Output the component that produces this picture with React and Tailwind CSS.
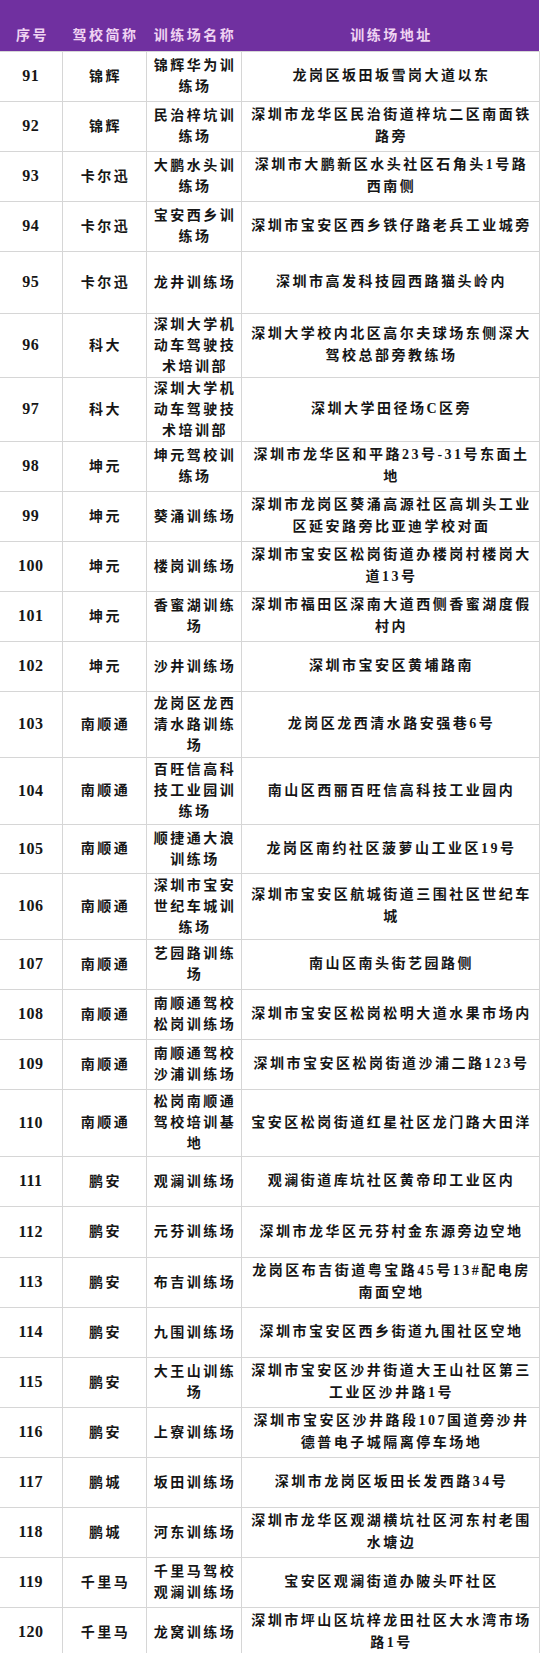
import React from 'react';

// [序号, 驾校简称, 训练场名称, 训练场地址, 行高]
const ROWS = [
  [91, '锦辉', '锦辉华为训\n练场', '龙岗区坂田坂雪岗大道以东', 50],
  [92, '锦辉', '民治梓坑训\n练场', '深圳市龙华区民治街道梓坑二区南面铁\n路旁', 50],
  [93, '卡尔迅', '大鹏水头训\n练场', '深圳市大鹏新区水头社区石角头1号路\n西南侧', 50],
  [94, '卡尔迅', '宝安西乡训\n练场', '深圳市宝安区西乡铁仔路老兵工业城旁', 50],
  [95, '卡尔迅', '龙井训练场', '深圳市高发科技园西路猫头岭内', 62],
  [96, '科大', '深圳大学机\n动车驾驶技\n术培训部', '深圳大学校内北区高尔夫球场东侧深大\n驾校总部旁教练场', 60],
  [97, '科大', '深圳大学机\n动车驾驶技\n术培训部', '深圳大学田径场C区旁', 64],
  [98, '坤元', '坤元驾校训\n练场', '深圳市龙华区和平路23号-31号东面土\n地', 50],
  [99, '坤元', '葵涌训练场', '深圳市龙岗区葵涌高源社区高圳头工业\n区延安路旁比亚迪学校对面', 50],
  [100, '坤元', '楼岗训练场', '深圳市宝安区松岗街道办楼岗村楼岗大\n道13号', 50],
  [101, '坤元', '香蜜湖训练\n场', '深圳市福田区深南大道西侧香蜜湖度假\n村内', 50],
  [102, '坤元', '沙井训练场', '深圳市宝安区黄埔路南', 50],
  [103, '南顺通', '龙岗区龙西\n清水路训练\n场', '龙岗区龙西清水路安强巷6号', 66],
  [104, '南顺通', '百旺信高科\n技工业园训\n练场', '南山区西丽百旺信高科技工业园内', 67],
  [105, '南顺通', '顺捷通大浪\n训练场', '龙岗区南约社区菠萝山工业区19号', 49],
  [106, '南顺通', '深圳市宝安\n世纪车城训\n练场', '深圳市宝安区航城街道三围社区世纪车\n城', 66],
  [107, '南顺通', '艺园路训练\n场', '南山区南头街艺园路侧', 50],
  [108, '南顺通', '南顺通驾校\n松岗训练场', '深圳市宝安区松岗松明大道水果市场内', 50],
  [109, '南顺通', '南顺通驾校\n沙浦训练场', '深圳市宝安区松岗街道沙浦二路123号', 50],
  [110, '南顺通', '松岗南顺通\n驾校培训基\n地', '宝安区松岗街道红星社区龙门路大田洋', 67],
  [111, '鹏安', '观澜训练场', '观澜街道库坑社区黄帝印工业区内', 50],
  [112, '鹏安', '元芬训练场', '深圳市龙华区元芬村金东源旁边空地', 51],
  [113, '鹏安', '布吉训练场', '龙岗区布吉街道粤宝路45号13#配电房\n南面空地', 50],
  [114, '鹏安', '九围训练场', '深圳市宝安区西乡街道九围社区空地', 50],
  [115, '鹏安', '大王山训练\n场', '深圳市宝安区沙井街道大王山社区第三\n工业区沙井路1号', 50],
  [116, '鹏安', '上寮训练场', '深圳市宝安区沙井路段107国道旁沙井\n德普电子城隔离停车场地', 50],
  [117, '鹏城', '坂田训练场', '深圳市龙岗区坂田长发西路34号', 50],
  [118, '鹏城', '河东训练场', '深圳市龙华区观湖横坑社区河东村老围\n水塘边', 50],
  [119, '千里马', '千里马驾校\n观澜训练场', '宝安区观澜街道办陂头吓社区', 50],
  [120, '千里马', '龙窝训练场', '深圳市坪山区坑梓龙田社区大水湾市场\n路1号', 50],
];

const font = "font-['Liberation_Serif','Noto_Sans_CJK_SC',serif]";

export default function App() {
  return (
    <div className={`w-[544px] bg-white ${font} text-[#161616]`}>
      <table className="w-[539px] table-fixed border-collapse">
        <colgroup>
          <col className="w-[62px]" />
          <col className="w-[84px]" />
          <col className="w-[95px]" />
          <col className="w-[298px]" />
        </colgroup>
        <thead>
          <tr className="h-[51px] bg-[#7030a0] text-[#efd3f2] text-[14px] font-bold tracking-[2.5px]">
            <th className="align-bottom pb-[4px] pl-[3px] leading-[22px] font-bold">序号</th>
            <th className="align-bottom pb-[4px] pl-[3px] leading-[22px] font-bold">驾校简称</th>
            <th className="align-bottom pb-[4px] pl-[3px] leading-[22px] font-bold">训练场名称</th>
            <th className="align-bottom pb-[4px] pl-[3px] leading-[22px] font-bold">训练场地址</th>
          </tr>
        </thead>
        <tbody>
          {ROWS.map(([no, school, name, addr, h]) => (
            <tr key={no} style={{ height: h }}>
              <td className="border border-[#d6d6d6] border-l-0 text-center align-middle text-[16px] font-bold tracking-[0.5px]">
                {no}
              </td>
              <td className="border border-[#d6d6d6] text-center align-middle text-[14px] font-bold tracking-[2.5px] pl-[3px]">
                {school}
              </td>
              <td className="border border-[#d6d6d6] text-center align-middle text-[14px] font-bold tracking-[2.5px] leading-[21px] whitespace-pre pl-[3px]">
                {name}
              </td>
              <td className="border border-[#d6d6d6] text-center align-middle text-[14px] font-bold tracking-[2.5px] leading-[22px] whitespace-pre pl-[3px]">
                {addr}
              </td>
            </tr>
          ))}
        </tbody>
      </table>
    </div>
  );
}
